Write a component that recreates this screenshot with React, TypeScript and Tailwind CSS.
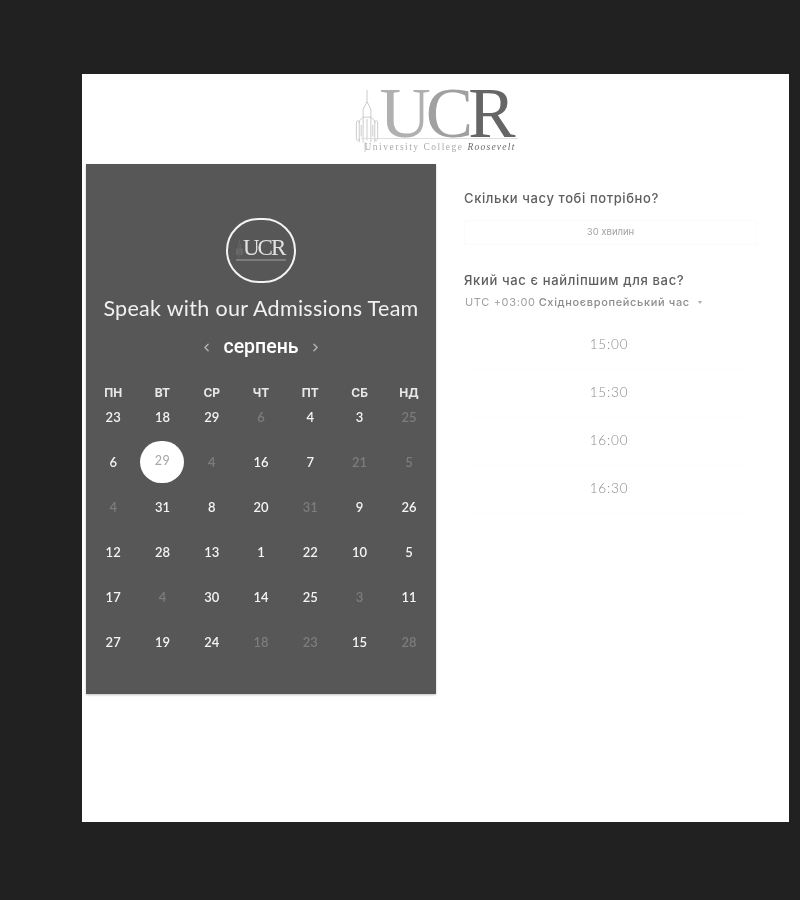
import React from 'react';
import { ChevronLeft, ChevronRight } from 'lucide-react';

const WEEK_DAYS = ['ПН', 'ВТ', 'СР', 'ЧТ', 'ПТ', 'СБ', 'НД'];

// muted cells are the ones that can't be booked
const DAYS: { n: number; muted?: boolean; selected?: boolean }[] = [
  { n: 23 }, { n: 18 }, { n: 29 }, { n: 6, muted: true }, { n: 4 }, { n: 3 }, { n: 25, muted: true },
  { n: 6 }, { n: 29, selected: true }, { n: 4, muted: true }, { n: 16 }, { n: 7 }, { n: 21, muted: true }, { n: 5, muted: true },
  { n: 4, muted: true }, { n: 31 }, { n: 8 }, { n: 20 }, { n: 31, muted: true }, { n: 9 }, { n: 26 },
  { n: 12 }, { n: 28 }, { n: 13 }, { n: 1 }, { n: 22 }, { n: 10 }, { n: 5 },
  { n: 17 }, { n: 4, muted: true }, { n: 30 }, { n: 14 }, { n: 25 }, { n: 3, muted: true }, { n: 11 },
  { n: 27 }, { n: 19 }, { n: 24 }, { n: 18, muted: true }, { n: 23, muted: true }, { n: 15 }, { n: 28, muted: true },
];

const TIMES = ['15:00', '15:30', '16:00', '16:30'];

const Tower = ({ className, stroke }: { className: string; stroke: string }) => (
  <svg viewBox="0 0 24 64" fill="none" stroke={stroke} strokeWidth="0.8" className={className}>
    <path d="M12 0V12M12 12L8 20V28L4 32V54M12 12L16 20V28L20 32V54" />
    <path d="M1 34V50C1 53 4 53 4 50M23 34V50C23 53 20 53 20 50M1 34C1 31 4 31 4 34M23 34C23 31 20 31 20 34" />
    <path d="M8 28V54M16 28V54M8 28H16M12 30V52M6 36V48M18 36V48" />
    <path d="M10 54V64" />
  </svg>
);

const Logo = () => (
  <div className="flex h-[90px] justify-center">
    <div className="relative mt-[6px] h-[80px] w-[166px]">
      <Tower className="absolute left-0 top-[10px] h-[62px] w-[24px]" stroke="#bdbdbd" />
      <div className="absolute left-[25px] top-[8px] flex font-['Liberation_Serif',serif] text-[71px] leading-[50px] tracking-[-5px]">
        <span className="text-[#b0b0b0]">U</span>
        <span className="text-[#a0a0a0]">C</span>
        <span className="text-[#666666]">R</span>
      </div>
      <div className="absolute left-[6px] top-[58px] h-px w-[157px] bg-[#dedede]" />
      <div className="absolute left-[10px] top-[60px] whitespace-nowrap font-['Liberation_Serif',serif] text-[9.5px] tracking-[1.5px] text-[#ababab]">
        University College <span className="italic tracking-[1.25px] text-[#6b6b6b]">Roosevelt</span>
      </div>
    </div>
  </div>
);

const Badge = () => (
  <div className="mx-auto flex h-[65px] w-[70px] items-center justify-center rounded-full border-[2.5px] border-[#f4f4f4]">
    <div className="relative h-[26px] w-[56px]">
      <div className="absolute left-[10px] top-0 font-['Liberation_Serif',serif] text-[23px] leading-[20px] tracking-[-2px] text-[#e2e2e2]">
        UCR
      </div>
      <Tower className="absolute left-[2px] top-[2px] h-[18px] w-[9px]" stroke="#9a9a9a" />
      <div className="absolute left-[3px] top-[21px] h-[2px] w-[50px] bg-[#7c7c7c]" />
    </div>
  </div>
);

const Calendar = () => (
  <div className="h-[530px] w-[350px] shrink-0 bg-[#575757] pt-[54px] shadow-[0_1px_2px_rgba(0,0,0,0.25)]">
    <Badge />
    <h1 className="mt-[11px] text-center font-['Lato',sans-serif] text-[21.5px] leading-[28px] tracking-[0.3px] text-[#f0f0f0]">
      Speak with our Admissions Team
    </h1>
    <div className="mt-[12px] flex h-[26px] items-center justify-center gap-[10px]">
      <ChevronLeft className="h-[13px] w-[13px] text-[#b5b5b5]" strokeWidth={2.5} />
      <span className="font-['Roboto',sans-serif] text-[19.5px] font-medium leading-none text-white">
        серпень
      </span>
      <ChevronRight className="h-[13px] w-[13px] text-[#b5b5b5]" strokeWidth={2.5} />
    </div>
    <div className="mt-[23px] grid grid-cols-[repeat(7,49.3px)] px-[2.5px]">
      {WEEK_DAYS.map((d) => (
        <div
          key={d}
          className="h-[20px] text-center font-['Inter',sans-serif] text-[12px] font-bold leading-[20px] text-[#e8e8e8]"
        >
          {d}
        </div>
      ))}
    </div>
    <div className="grid grid-cols-[repeat(7,49.3px)] grid-rows-[repeat(6,45px)] px-[2.5px]">
      {DAYS.map((d, i) => (
        <div key={i} className="flex h-[45px] items-start justify-center">
          {d.selected ? (
            <div className="-mt-[7px] flex h-[42px] w-[44px] items-center justify-center rounded-full bg-white font-['Lato',sans-serif] text-[12.5px] tracking-[0.5px] text-[#a6a6a6] pb-[2px]">
              {d.n}
            </div>
          ) : (
            <span
              className={`mt-[2px] font-['Lato',sans-serif] text-[13px] font-semibold leading-[24px] ${
                d.muted ? 'text-[#7d7d7d]' : 'text-[#f4f4f4]'
              }`}
            >
              {d.n}
            </span>
          )}
        </div>
      ))}
    </div>
  </div>
);

const Booking = () => (
  <div className="ml-[28px] w-[293px] pt-[24px]">
    <h2 className="font-['Inter',sans-serif] text-[13px] font-medium leading-[20px] tracking-[0.6px] text-[#5e5e5e]">
      Скільки часу тобі потрібно?
    </h2>
    <div className="mt-[12px] flex h-[25px] items-center justify-center rounded-[2px] border border-[#fbfbfb] font-['Inter',sans-serif] text-[9.5px] text-[#a3a3a3]">
      30 хвилин
    </div>
    <h2 className="mt-[25px] font-['Inter',sans-serif] text-[13px] font-medium leading-[20px] tracking-[0.65px] text-[#5e5e5e]">
      Який час є найліпшим для вас?
    </h2>
    <div className="mt-[3px] flex h-[18px] items-center whitespace-nowrap pl-px font-['Inter',sans-serif] text-[11px] tracking-[0.65px] text-[#a0a0a0]">
      UTC +03:00 <span className="ml-[3px] font-medium text-[#8c8c8c]">Східноєвропейський час</span>
      <svg viewBox="0 0 6 4" className="ml-[7px] mt-[1px] h-[3px] w-[6px]" fill="#b0b0b0">
        <path d="M0 0H6L3 4Z" />
      </svg>
    </div>
    <div className="mt-[10px] flex flex-col">
      {TIMES.map((t) => (
        <div
          key={t}
          className="ml-[6px] flex h-[48px] w-[278px] items-center justify-center border-b border-[#fdfdfd] font-['Lato',sans-serif] text-[13.5px] font-light tracking-[0.8px] text-[#8a8a8a]"
        >
          {t}
        </div>
      ))}
    </div>
  </div>
);

export default function App() {
  return (
    <div className="h-[900px] w-[800px] overflow-hidden bg-[#212121] pl-[82px] pt-[74px]">
      <div className="h-[748px] w-[707px] bg-white pl-[4px] blur-[0.3px]">
        <Logo />
        <div className="flex items-start">
          <Calendar />
          <Booking />
        </div>
      </div>
    </div>
  );
}
